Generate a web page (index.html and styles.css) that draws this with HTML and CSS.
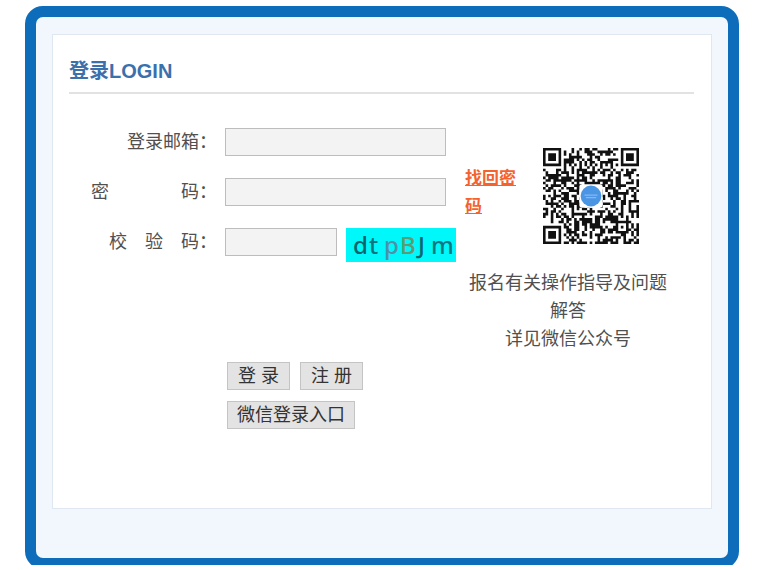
FILE: index.html
```html
<!DOCTYPE html>
<html lang="zh-CN">
<head>
    <meta charset="UTF-8">
    <title>登录</title>
    <link rel="stylesheet" href="styles.css">
</head>
<body>
    <div class="page">
        <div class="frame">
            <div class="panel">
                <h1 class="title">登录LOGIN</h1>

                <div class="content">
                    <form class="login-form">
                        <div class="row">
                            <label class="label" for="email">登录邮箱：</label>
                            <input class="field" type="text" id="email" name="email">
                        </div>
                        <div class="row">
                            <label class="label" for="password">密　　　　码：</label>
                            <input class="field" type="password" id="password" name="password">
                        </div>
                        <div class="row">
                            <label class="label" for="code">校　验　码：</label>
                            <input class="field field-code" type="text" id="code" name="code">
                            <svg class="captcha" width="110" height="34" viewBox="0 0 110 34">
                                <rect width="110" height="34" fill="#00f8fa"/>
                                <text x="7" y="26" fill="#07636d">d</text>
                                <text x="23" y="26" fill="#087581">t</text>
                                <text x="38" y="26" fill="#528fa8">p</text>
                                <text x="54" y="26" fill="#5f9a72">B</text>
                                <text x="72" y="26" fill="#07666d">J</text>
                                <text x="85" y="26" fill="#097783">m</text>
                            </svg>
                        </div>

                        <div class="actions">
                            <button type="submit" class="btn">登 录</button>
                            <button type="button" class="btn">注 册</button>
                        </div>
                        <div class="actions">
                            <button type="button" class="btn">微信登录入口</button>
                        </div>
                    </form>

                    <div class="side">
                        <div class="side-top">
                            <a class="forgot" href="#">找回密码</a>
                            <svg class="qr" viewBox="0 0 37 37">
                                <path id="qr-modules" fill="#111"/>
                                <rect x="14" y="14" width="9" height="9" rx="1" fill="#fff"/>
                                <circle cx="18.5" cy="18.5" r="4" fill="#4a95e4"/>
                                <path d="M16 18.2h5M16.5 19.1h4" stroke="#86b8ee" stroke-width="0.5"/>
                            </svg>
                        </div>
                        <p class="note">报名有关操作指导及问题解答<br>详见微信公众号</p>
                    </div>
                </div>
            </div>
        </div>
    </div>
    <script src="qr.js"></script>
</body>
</html>
```

FILE: styles.css
```css
* {
    box-sizing: border-box;
}
body {
    margin: 0;
    background: #fff;
    color: #505050;
    font-family: "Liberation Sans", "Noto Sans CJK SC", sans-serif;
    font-size: 18px;
    line-height: 28px;
}
.page {
    height: calc(100vh - 5px);
    padding: 6px 44px 0 25px;
    overflow: hidden;
}
.frame {
    padding: 17px 16px 49px;
    border: 11px solid #0d6dbb;
    border-radius: 18px;
    background: #f1f7fd;
}
.panel {
    padding: 22px 17px 68px 16px;
    border: 1px solid #dfe8f0;
    background: #fff;
}
.title {
    margin: 0;
    padding-bottom: 7px;
    border-bottom: 2px solid #e2e2e2;
    color: #3a71ad;
    font-size: 20px;
    font-weight: bold;
    line-height: 28px;
}
.content {
    display: flex;
    gap: 10px;
    padding-top: 34px;
}
.login-form {
    width: 386px;
    flex: none;
}
.row {
    display: flex;
    height: 28px;
    margin-bottom: 22px;
}
.label {
    width: 148px;
    margin-right: 8px;
    flex: none;
    text-align: right;
    white-space: nowrap;
}
.field {
    width: 221px;
    height: 28px;
    padding: 0 6px;
    border: 1px solid #bdbdbd;
    background: #f3f3f3;
    font: inherit;
}
.field-code {
    width: 112px;
    margin-right: 9px;
}
.captcha {
    flex: none;
    font-family: "Noto Sans", sans-serif;
    font-size: 24px;
    font-weight: 500;
}
.actions {
    display: flex;
    gap: 10px;
    margin: 0 0 11px 158px;
}
.login-form .row + .actions {
    margin-top: 106px;
}
.btn {
    min-width: 63px;
    height: 28px;
    padding: 0 9px;
    border: 1px solid #c4c4c4;
    background: #e3e3e3;
    color: #333;
    font: inherit;
    line-height: 26px;
    white-space: nowrap;
}
.side {
    width: 206px;
    padding-top: 20px;
}
.side-top {
    display: flex;
    gap: 24px;
}
.forgot {
    width: 54px;
    margin-top: 17px;
    color: #f4622f;
    font-size: 17px;
    font-weight: bold;
}
.qr {
    width: 96px;
    height: 96px;
}
.note {
    margin: 25px 0 0;
    text-align: center;
}
```

FILE: qr.js
```javascript
const SIZE = 37;
let seed = 20;

function random() {
    seed = (seed * 16807) % 2147483647;
    return seed / 2147483647;
}

// distance in modules from the centre of a square marker
function ring(x, y, cx, cy) {
    return Math.max(Math.abs(x - cx), Math.abs(y - cy));
}

function isDark(x, y) {
    const noise = random() < 0.54;

    // corner markers
    for (const [cx, cy] of [[3, 3], [33, 3], [3, 33]]) {
        const r = ring(x, y, cx, cy);
        if (r <= 4) {
            return r <= 1 || r === 3;
        }
    }

    // small alignment marker
    const r = ring(x, y, 30, 30);
    if (r <= 2) {
        return r !== 1;
    }

    // timing lines
    if (x === 6 || y === 6) {
        return (x + y) % 2 === 0;
    }
    return noise;
}

let d = '';
for (let y = 0; y < SIZE; y++) {
    for (let x = 0; x < SIZE; x++) {
        if (isDark(x, y)) {
            d += `M${x} ${y}h1v1h-1z`;
        }
    }
}
document.getElementById('qr-modules').setAttribute('d', d);
```
